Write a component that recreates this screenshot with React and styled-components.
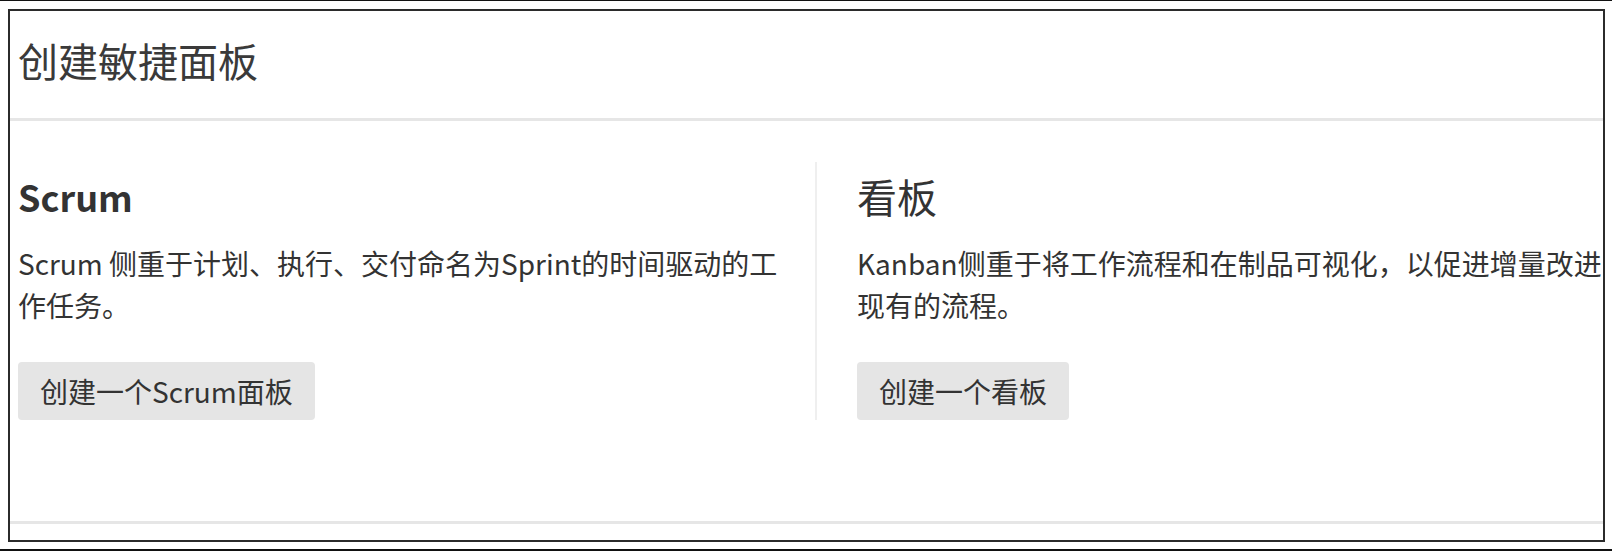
import React from "react";
import styled, { createGlobalStyle } from "styled-components";

const Global = createGlobalStyle`
  html, body { margin: 0; padding: 0; background: #fff; }
  body { font-family: "Noto Sans CJK SC", "Noto Sans", sans-serif; color: #333; }
  * { box-sizing: border-box; }
`;

const Frame = styled.div`
  width: 1612px;
  height: 551px;
  border-top: 1px solid #111;
  border-bottom: 2px solid #111;
  padding: 8px 7px 7px 8px;
  display: flex;
`;

const Card = styled.section`
  flex: 1;
  border: 2px solid #2b2b2b;
  display: flex;
  flex-direction: column;
`;

const Header = styled.header`
  height: 107px;
  padding: 25px 8px 0;
`;

const Title = styled.h1`
  margin: 0;
  font-size: 40px;
  line-height: 48px;
  font-weight: 400;
  color: #3a3a3a;
`;

const Rule = styled.div`
  height: 3px;
  background: #e6e6e6;
`;

const Body = styled.div`
  height: 400px;
  padding-top: 41px;
  display: grid;
  grid-template-columns: 805px 1fr;
  align-items: start;
`;

const Column = styled.div`
  padding-left: ${(p) => (p.$divided ? "40px" : "8px")};
  border-left: ${(p) => (p.$divided ? "2px solid #efefef" : "none")};
  display: flex;
  flex-direction: column;
  align-items: flex-start;
`;

const Heading = styled.h2`
  margin: 10px 0 0;
  font-size: ${(p) => (p.$strong ? "36px" : "40px")};
  line-height: 48px;
  font-weight: ${(p) => (p.$strong ? 700 : 400)};
  color: #333;
`;

const Text = styled.p`
  margin: 22px 0 0;
  font-size: 28px;
  line-height: 42px;
  color: #333;
  white-space: nowrap;
`;

const Button = styled.button`
  margin-top: 36px;
  height: 58px;
  padding: 0 22px;
  border: none;
  border-radius: 4px;
  background: #e5e5e5;
  color: #333;
  font-family: inherit;
  font-size: 28px;
  line-height: 58px;
  cursor: pointer;
`;

const Footer = styled.div`
  flex: 1;
`;

export default function App() {
  return (
    <>
      <Global />
      <Frame>
        <Card>
          <Header>
            <Title>创建敏捷面板</Title>
          </Header>
          <Rule />
          <Body>
            <Column>
              <Heading $strong>Scrum</Heading>
              <Text>
                Scrum 侧重于计划、执行、交付命名为Sprint的时间驱动的工
                <br />
                作任务。
              </Text>
              <Button>创建一个Scrum面板</Button>
            </Column>
            <Column $divided>
              <Heading>看板</Heading>
              <Text>
                Kanban侧重于将工作流程和在制品可视化，以促进增量改进
                <br />
                现有的流程。
              </Text>
              <Button>创建一个看板</Button>
            </Column>
          </Body>
          <Rule />
          <Footer />
        </Card>
      </Frame>
    </>
  );
}
